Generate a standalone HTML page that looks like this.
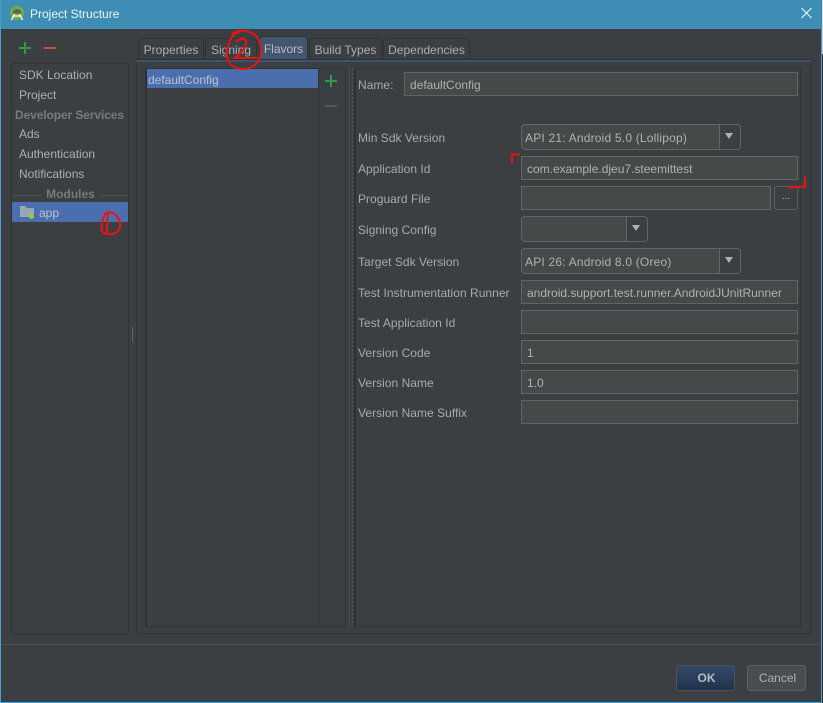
<!DOCTYPE html>
<html><head><meta charset="utf-8"><title>Project Structure</title>
<style>
html,body{margin:0;padding:0;background:#3c3f41}
body{position:relative;width:823px;height:703px;overflow:hidden;font-family:"Liberation Sans","DejaVu Sans",sans-serif;font-size:12px;color:#a9b0b4}
div,span{position:absolute;box-sizing:border-box;white-space:nowrap}
.t{line-height:16px;height:16px}
.box{border:1px solid #323232}
.f{left:521px;width:277px;height:24px;background:#45494a;border:1px solid #646464;line-height:24px;padding-left:5px;color:#adb3b5}
.c{left:521px;height:26px;background:#45494a;border:1px solid #646464;border-radius:4px;line-height:26px;padding-left:3px;color:#adb3b5;letter-spacing:.2px}
.c i{position:absolute;right:0;top:0;bottom:0;width:20px;border-left:1px solid #646464;background:#3c3f41;border-radius:0 3px 3px 0}
.c i:after{content:"";position:absolute;left:5px;top:8px;border-left:4px solid transparent;border-right:4px solid transparent;border-top:6px solid #afb1b3}
.l{left:358px;color:#a2abb2;letter-spacing:.03px}
.tab{height:22px;top:38px;border:1px solid #2f3133;border-bottom:0;border-radius:4px 4px 0 0;background:#3c3f41;line-height:23px;text-align:center;color:#a9b0b4}
</style></head><body>
<div style="left:0;top:0;width:823px;height:703px;background:#3c3f41"></div>
<div style="left:0;top:0;width:822px;height:29px;background:#3d8db5"></div>
<div style="left:0;top:0;width:1px;height:703px;background:#4a9fd0"></div>
<div style="left:0;top:702px;width:822px;height:1px;background:#4a9fd0"></div>
<div style="left:821px;top:29px;width:2px;height:674px;background:#2e3032"></div>
<div style="left:821px;top:29px;width:1px;height:674px;background:#4a9fd0"></div>
<div style="left:822px;top:0;width:1px;height:54px;background:#cfd6da"></div>

<svg style="position:absolute;left:9px;top:5px" width="18" height="18" viewBox="0 0 18 18">
<circle cx="8" cy="8" r="7" fill="#78a94a"/><path d="M3.500 8.500 A4.500 4.500 0 0 1 12.500 8.500 Z" fill="#5a6a45"/><path d="M2.500 15 L5.500 9 M13.500 15 L10.500 9 M5 11 H11" stroke="#e8efe0" stroke-width="1.600" fill="none"/>
</svg>
<div class="t" style="left:30px;top:6px;color:#eef5f9;font-size:12px">Project Structure</div>
<svg style="position:absolute;left:800px;top:6px" width="13" height="14" viewBox="0 0 13 14"><path d="M1.500 2 L11.500 12 M11.500 2 L1.500 12" stroke="#eef5f9" stroke-width="1.100"/></svg>

<svg style="position:absolute;left:18px;top:41px" width="42" height="14" viewBox="0 0 42 14"><path d="M1 7 H13 M7 1 V13" stroke="#2f9a4a" stroke-width="2"/><path d="M26 7 H38" stroke="#c7513f" stroke-width="2"/></svg>

<div class="box" style="left:11px;top:63px;width:118px;height:571px"></div>
<div class="t" style="left:19px;top:67px">SDK Location</div>
<div class="t" style="left:19px;top:87px">Project</div>
<div class="t" style="left:15px;top:107px;color:#777b7e;font-weight:bold;letter-spacing:-.1px">Developer Services</div>
<div class="t" style="left:19px;top:126px">Ads</div>
<div class="t" style="left:19px;top:146px">Authentication</div>
<div class="t" style="left:19px;top:166px">Notifications</div>
<div style="left:12px;top:195px;width:116px;height:1px;background:#515151"></div>
<div class="t" style="left:42px;top:186px;width:57px;text-align:center;background:#3c3f41;color:#777b7e;font-weight:bold">Modules</div>
<div style="left:12px;top:202px;width:116px;height:20px;background:#4b6eaf"></div>
<svg style="position:absolute;left:19px;top:205px" width="17" height="15" viewBox="0 0 17 15"><path d="M1 1 H6 L8 3 H15 V12 H1 Z" fill="#9aa7b0"/><circle cx="12.500" cy="11.500" r="2.500" fill="#a4c639"/></svg>
<div class="t" style="left:39px;top:205px;color:#bbc3cd">app</div>

<div style="left:131px;top:327px;width:3px;height:15px;background-image:radial-gradient(#8a8a8a 0.6px,transparent 0.7px);background-size:3px 2px"></div>

<div class="tab" style="left:138px;width:66px">Properties</div>
<div class="tab" style="left:205px;width:52px">Signing</div>
<div class="tab" style="left:259px;width:49px;top:36px;height:24px;background:#44556f;color:#b6bfc9;line-height:25px">Flavors</div>
<div class="tab" style="left:309px;width:73px">Build Types</div>
<div class="tab" style="left:383px;width:87px">Dependencies</div>

<div style="left:136px;top:60px;width:675px;height:574px;border:1px solid #2f3133;border-top:0"></div>
<div style="left:136px;top:59px;width:675px;height:3px;background:#3e5272;border-top:1px solid #2f3133"></div>

<div style="left:145px;top:68px;width:201px;height:559px;border:1px solid #323232;border-left:2px solid #2e3032"></div>
<div style="left:318px;top:69px;width:1px;height:557px;background:#323232"></div>
<div style="left:147px;top:69px;width:171px;height:19px;background:#4b6eaf"></div>
<div class="t" style="left:148px;top:72px;color:#bbc3cd">defaultConfig</div>
<svg style="position:absolute;left:324px;top:74px" width="14" height="36" viewBox="0 0 14 36"><path d="M1 7 H13 M7 1 V13" stroke="#2f9a4a" stroke-width="2"/><path d="M1 32 H13" stroke="#55585a" stroke-width="2"/></svg>
<div style="left:348px;top:68px;width:5px;height:558px;background-image:radial-gradient(#54575a 0.6px,transparent 0.7px);background-size:3px 4px"></div>
<div style="left:354px;top:68px;width:447px;height:559px;border:1px solid #323232;border-left:2px solid #2e3032"></div>

<div class="t l" style="top:77px">Name:</div>
<div class="f" style="left:404px;width:394px;top:72px">defaultConfig</div>

<div class="t l" style="top:130px">Min Sdk Version</div>
<div class="c" style="top:124px;width:220px">API 21: Android 5.0 (Lollipop)<i></i></div>
<div class="t l" style="top:161px">Application Id</div>
<div class="f" style="top:156px">com.example.djeu7.steemittest</div>
<div class="t l" style="top:191px">Proguard File</div>
<div class="f" style="top:186px;width:250px"></div>
<div style="left:774px;top:186px;width:24px;height:24px;border:1px solid #5a5d5f;border-radius:3px;text-align:center;line-height:20px;color:#b3b9bb;font-size:10px">...</div>
<div class="t l" style="top:222px">Signing Config</div>
<div class="c" style="top:216px;width:127px"><i></i></div>
<div class="t l" style="top:254px">Target Sdk Version</div>
<div class="c" style="top:248px;width:220px">API 26: Android 8.0 (Oreo)<i></i></div>
<div class="t l" style="top:285px">Test Instrumentation Runner</div>
<div class="f" style="top:280px">android.support.test.runner.AndroidJUnitRunner</div>
<div class="t l" style="top:315px">Test Application Id</div>
<div class="f" style="top:310px"></div>
<div class="t l" style="top:345px">Version Code</div>
<div class="f" style="top:340px">1</div>
<div class="t l" style="top:375px">Version Name</div>
<div class="f" style="top:370px">1.0</div>
<div class="t l" style="top:405px">Version Name Suffix</div>
<div class="f" style="top:400px"></div>

<div style="left:1px;top:644px;width:820px;height:1px;background:#515151"></div>
<div style="left:676px;top:665px;width:59px;height:26px;border:1px solid #4a5260;border-radius:3px;background:linear-gradient(#34496a,#22324a);text-align:center;line-height:25px;color:#b3bcc5;font-weight:bold;padding-left:2px">OK</div>
<div style="left:747px;top:665px;width:59px;height:26px;border:1px solid #5e6060;border-radius:3px;background:#4a4d4f;text-align:center;line-height:25px;color:#a9b0b4;padding-left:2px">Cancel</div>

<svg style="position:absolute;left:0;top:0" width="823" height="703" viewBox="0 0 823 703" fill="none" stroke="#f01010">
<path d="M512 163 V154.500 H520" stroke-width="2"/>
<path d="M788 187.500 L805 186.500 V177" stroke-width="2"/>
<path d="M240 32 C232 33 228 42 227 52 C226 62 232 69 243 69 C253 69 261 62 261 50 C261 40 256 33 246 31 C242 30 236 31 232 34" stroke-width="2"/>
<path d="M236 42 C240 38 246 37 246 42 C246 48 240 54 235 58 L257 58" stroke-width="2"/>
<path d="M106 213 C102 218 101 226 102 231 C104 235 112 235 117 232 C121 229 121 222 118 218 C115 213 110 211 106 213 M108 213 C107 220 107 228 107 234" stroke-width="2"/>
</svg>
</body></html>
